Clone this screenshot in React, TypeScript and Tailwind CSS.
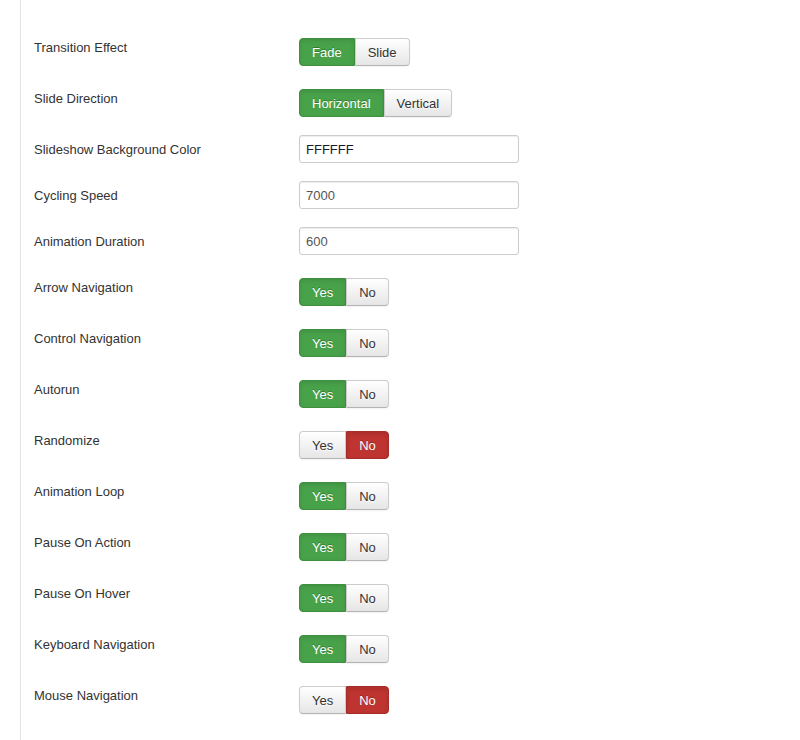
import React from 'react';

type Choice = { label: string; active?: 'green' | 'red' };

interface Row {
  label: string;
  kind: 'buttons' | 'input';
  choices?: Choice[];
  value?: string;
  dark?: boolean;
}

const yesNo = (yes: boolean): Choice[] =>
  yes
    ? [{ label: 'Yes', active: 'green' }, { label: 'No' }]
    : [{ label: 'Yes' }, { label: 'No', active: 'red' }];

const rows: Row[] = [
  { label: 'Transition Effect', kind: 'buttons', choices: [{ label: 'Fade', active: 'green' }, { label: 'Slide' }] },
  { label: 'Slide Direction', kind: 'buttons', choices: [{ label: 'Horizontal', active: 'green' }, { label: 'Vertical' }] },
  { label: 'Slideshow Background Color', kind: 'input', value: 'FFFFFF', dark: true },
  { label: 'Cycling Speed', kind: 'input', value: '7000' },
  { label: 'Animation Duration', kind: 'input', value: '600' },
  { label: 'Arrow Navigation', kind: 'buttons', choices: yesNo(true) },
  { label: 'Control Navigation', kind: 'buttons', choices: yesNo(true) },
  { label: 'Autorun', kind: 'buttons', choices: yesNo(true) },
  { label: 'Randomize', kind: 'buttons', choices: yesNo(false) },
  { label: 'Animation Loop', kind: 'buttons', choices: yesNo(true) },
  { label: 'Pause On Action', kind: 'buttons', choices: yesNo(true) },
  { label: 'Pause On Hover', kind: 'buttons', choices: yesNo(true) },
  { label: 'Keyboard Navigation', kind: 'buttons', choices: yesNo(true) },
  { label: 'Mouse Navigation', kind: 'buttons', choices: yesNo(false) },
];

const ButtonGroup: React.FC<{ choices: Choice[] }> = ({ choices }) => (
  <div className="flex pt-[5px]">
    {choices.map((c, i) => {
      const first = i === 0;
      const last = i === choices.length - 1;
      const shape = `${first ? 'rounded-l-[4px]' : ''} ${last ? 'rounded-r-[4px]' : ''}`;
      if (c.active === 'green') {
        return (
          <div
            key={c.label}
            className={`h-[28px] px-3 pt-px flex items-center border border-[#3e8f3e] bg-[#48a24a] text-white [text-shadow:0_-1px_0_rgba(0,0,0,0.25)] shadow-[inset_0_2px_4px_rgba(0,0,0,0.1)] ${shape}`}
          >
            {c.label}
          </div>
        );
      }
      if (c.active === 'red') {
        return (
          <div
            key={c.label}
            className={`h-[28px] px-3 pt-px flex items-center border border-[#a52e28] bg-[#bd3430] text-white [text-shadow:0_-1px_0_rgba(0,0,0,0.25)] shadow-[inset_0_2px_4px_rgba(0,0,0,0.1)] ${shape}`}
          >
            {c.label}
          </div>
        );
      }
      return (
        <div
          key={c.label}
          className={`h-[28px] px-3 pt-px flex items-center border border-[#cccccc] border-b-[#b3b3b3] bg-gradient-to-b from-white to-[#e6e6e6] text-[#333333] [text-shadow:0_1px_1px_rgba(255,255,255,0.75)] shadow-[inset_0_1px_0_rgba(255,255,255,0.2),0_1px_2px_rgba(0,0,0,0.05)] ${shape}`}
        >
          {c.label}
        </div>
      );
    })}
  </div>
);

const TextInput: React.FC<{ value: string; dark?: boolean }> = ({ value, dark }) => (
  <div
    className={`w-[220px] h-[28px] px-[6px] pt-px flex items-center border border-[#cccccc] rounded-[3px] bg-white shadow-[inset_0_1px_1px_rgba(0,0,0,0.075)] ${dark ? 'text-[#1a1a2e]' : 'text-[#555555]'}`}
  >
    {value}
  </div>
);

export default function App() {
  return (
    <div className="w-[800px] h-[740px] bg-white font-['Liberation_Sans',Arial,sans-serif] text-[13px] leading-[18px] text-[#333333] overflow-hidden">
      <div className="ml-[20px] h-full border-l border-[#e3e3e3] pl-[13px] pt-[33px]">
        {rows.map((r) => (
          <div key={r.label} className="flex items-start mb-[18px]">
            <div className="w-[265px] pt-[6px]">{r.label}</div>
            {r.kind === 'buttons' ? (
              <ButtonGroup choices={r.choices!} />
            ) : (
              <TextInput value={r.value!} dark={r.dark} />
            )}
          </div>
        ))}
      </div>
    </div>
  );
}
